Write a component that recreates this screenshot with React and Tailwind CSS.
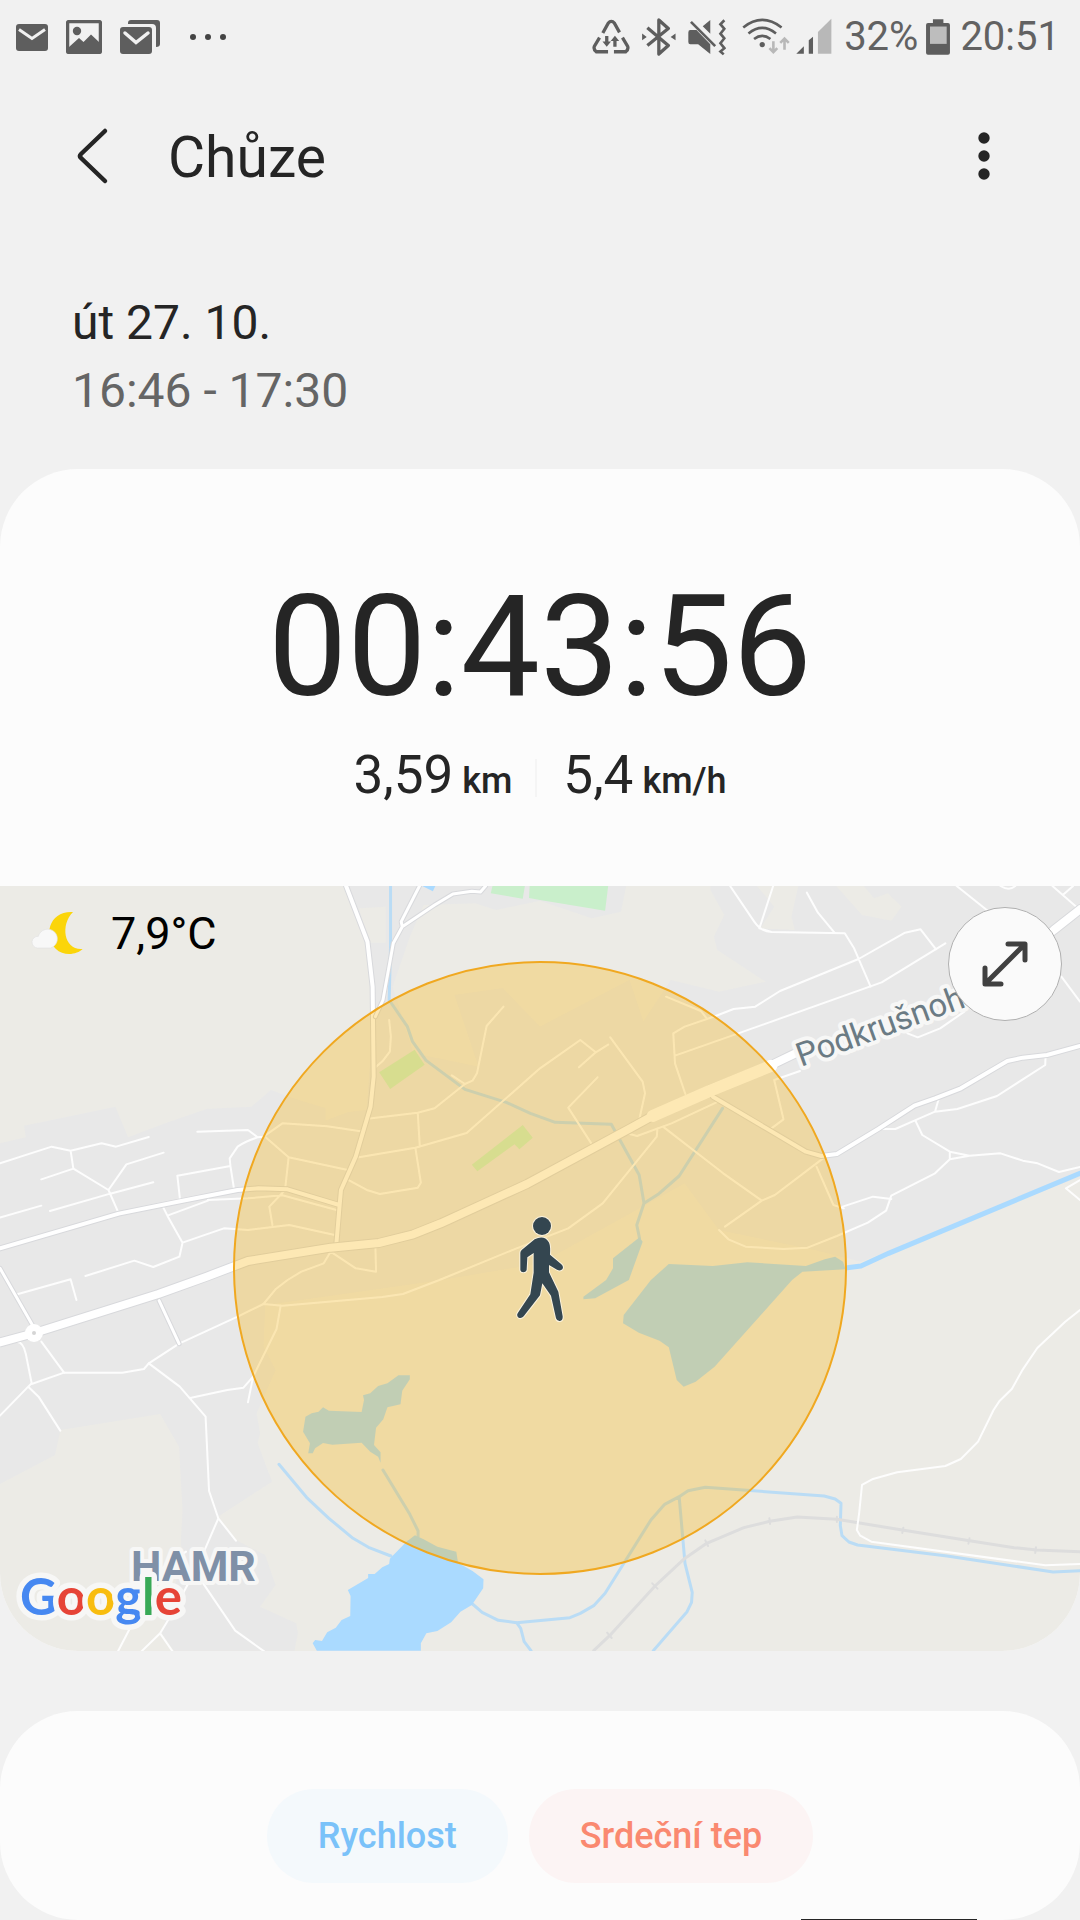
import React from "react";

const dark = "#5e5e5e";
const pale = "#b8b8b8";

function StatusBar() {
  return (
    <div className="flex h-[74px] items-center justify-between pl-4 pr-5 text-[40px] leading-none text-[#626262]">
      <div className="flex items-center gap-[18px]">
        <svg className="h-[34px] w-8" viewBox="0 0 32 34" aria-label="E-mail">
          <rect y="4" width="32" height="27" rx="3" fill={dark} />
          <path d="M3 9.500L16 18.500 29 9.500" fill="none" stroke="#f1f1f1" strokeWidth="3" />
        </svg>
        <svg className="h-[34px] w-9" viewBox="0 0 36 34" aria-label="Obrázek">
          <rect x="1.500" y="1.500" width="33" height="31" rx="2" fill="none" stroke={dark} strokeWidth="3.500" />
          <circle cx="11" cy="11" r="4.200" fill={dark} />
          <path d="M3 27L13 18 17.500 22 25 14.500 33 22V32H3z" fill={dark} />
        </svg>
        <svg className="h-[34px] w-10" viewBox="0 0 40 34" aria-label="E-maily">
          <path d="M8 3Q8 0 11 0H37Q40 0 40 3V24Q40 27 36 27V8Q36 4 32 4H8z" fill={dark} />
          <rect y="7" width="32" height="27" rx="3" fill={dark} />
          <path d="M5 13L16 22.500 28 13" fill="none" stroke="#f1f1f1" strokeWidth="3.500" strokeLinecap="round" />
        </svg>
        <svg className="ml-3 h-[34px] w-9" viewBox="0 0 36 34" aria-label="Další oznámení">
          <g fill="#444"><circle cx="3" cy="17" r="3" /><circle cx="18" cy="17" r="3" /><circle cx="33" cy="17" r="3" /></g>
        </svg>
      </div>
      <div className="flex items-center">
        <svg className="h-[38px] w-[38px]" viewBox="90 50 114 116" aria-label="Úspora dat">
          <g fill="none" stroke={dark} strokeWidth="10">
            <path d="M122 96L139 65Q143 60 148 60Q153 60 157 65L173 94" />
            <path d="M112 110L96 137Q93 146 102 153H138" />
            <path d="M182 110L198 137Q201 146 192 153H156" />
          </g>
          <path d="M129 105h10v17h8l-13 16-13-16h8zM154 138h10v-18h8l-13-16-13 16h8z" fill={dark} />
        </svg>
        <svg className="ml-[11px] h-[38px] w-[35px]" viewBox="236 50 104 116" aria-label="Bluetooth">
          <path d="M254 80L318 134 289 160V56L318 82 254 134" fill="none" stroke={dark} strokeWidth="10" strokeLinejoin="round" />
          <path d="M238 97v21l14-10zM340 97v21l-15-10z" fill={dark} />
        </svg>
        <svg className="ml-3 h-[38px] w-[38px]" viewBox="378 50 114 116" aria-label="Vibrace">
          <path d="M384 87H403L445 130V160L408 130H384Q378 130 378 123V94Q378 87 384 87zM422 75L445 56V98z" fill={dark} />
          <path d="M386 62L460 136" stroke={dark} strokeWidth="8" />
          <path d="M488 57L476 69 488 83 476 98 488 112 476 127 488 142 476 152 486 161" fill="none" stroke={dark} strokeWidth="8" />
        </svg>
        <svg className="ml-4 h-[38px] w-12" viewBox="540 50 145 116" aria-label="Wi-Fi">
          <g fill="none" stroke={dark} strokeWidth="8">
            <path d="M543 79Q601 33 660 79" /><path d="M559 97Q601 63 643 97" /><path d="M576 114Q601 95 626 114" />
          </g>
          <circle cx="601" cy="131" r="8" fill={dark} />
          <path d="M635 121V152M623 142L635 154 647 142M669 147V114M656 126L669 113 682 126" fill="none" stroke={pale} strokeWidth="8" />
        </svg>
        <svg className="ml-[6px] h-[38px] w-9" viewBox="703 50 108 116" aria-label="Signál">
          <path d="M703 159L726 136V159zM741 118L754 107V159H741z" fill={dark} />
          <path d="M769 93L810 52V159H769z" fill={pale} />
        </svg>
        <span className="ml-3">32%</span>
        <svg className="ml-2 h-[38px] w-6" viewBox="1103 50 73 116" aria-label="Baterie">
          <path d="M1124 54H1156V65H1170Q1176 65 1176 71V156Q1176 162 1170 162H1109Q1103 162 1103 156V71Q1103 65 1109 65H1124z" fill={dark} />
          <path d="M1115 76H1166V129H1115z" fill="#bdbdbd" />
        </svg>
        <span className="ml-[10px]">20:51</span>
      </div>
    </div>
  );
}

function Line({ d, w = 2, c = "#fdfdfd" }) {
  return <path d={d} fill="none" stroke={c} strokeWidth={w} strokeLinejoin="round" strokeLinecap="round" vectorEffect="non-scaling-stroke" />;
}

function Road({ d, w }) {
  return (
    <>
      <Line d={d} w={w + 2} c="#d8d9dc" />
      <Line d={d} w={w} c="#ffffff" />
    </>
  );
}

const stream = "#badcf5";

function RouteMap() {
  return (
    <svg className="block h-full w-full" viewBox="0 886 1080 765" preserveAspectRatio="xMidYMid slice" role="img" aria-label="Mapa trasy">
      <rect y="886" width="1080" height="765" fill="#ecebe6" />
      <g transform="translate(0 880) scale(.34439 .33333)">
        <path fill="#e8e8e8" d="M0 790L75 772 70 737 335 680 372 772 480 730 600 687 730 680 787 630 850 655 945 685 945 722 1010 697 1065 690 1085 400 1070 190 1040 85 1005 18H1818L1803 95 1718 115 1568 62 1440 90 1380 70 1230 75 1190 170 1140 320 1200 520 1390 560 1320 345 1460 325 1568 440 1828 300 1868 425 1948 300 2088 335 2223 305 2083 210 2073 170 2103 105 2063 30V18H3136V890L2500 1145 2368 1110 2088 1050 1988 910 1568 1150 1280 1200 770 1275 765 1400 800 1470 745 1600 755 1660 748 1690 790 1805 633 1910 685 1980 770 2025 800 2115 755 2180 860 2230 865 2260 855 2312H505L470 2260 530 2030 525 1990 530 1890 520 1700 465 1602 175 1650 160 1725 0 1812z" />
        <path fill="#ecebe6" d="M1042 85L1120 80V188H1072zM2198 18L2248 80 2208 145 2308 150 2298 110 2318 18zM2428 18L2503 105 2588 122 2618 80 2578 40 2538 55 2508 18z" />
        <path fill="#c9efcb" d="M1430 18H1524L1518 56 1425 40zM1538 18H1766L1757 92 1568 60 1536 54zM1101 577L1204 509 1233 554 1133 627zM1370 854L1518 735 1547 773 1508 808 1494 793 1386 874z" />
        <path fill="#aadaff" d="M1226 18H1264L1257 34z" />

        <g>
          <Line c={stream} w={3} d="M1134 18V200L1130 360 1183 440 1198 485 1237 541 1350 628 1470 667 1540 700 1612 727 1775 733 1856 885 1870 970 1849 1035 1857 1075M1870 970L1911 943 1972 888 2098 685" />
          <Line c="#aadaff" w={5} d="M2460 1163L2500 1158 2580 1120 3136 880" />
          <Line c={stream} w={3} d="M810 1753L890 1852 955 1915 1025 1975 1070 2002 1135 2028M1112 1770L1190 1903 1214 1953V1970M1372 2172L1400 2197 1447 2221 1500 2228 1655 2213 1685 2200 1724 2177 1757 2140 1890 1920 1930 1873 1972 1850 1998 1832 2048 1822 2393 1848 2425 1857 2442 1870 2440 1937 2445 1967 2465 1986 2490 1995 2750 2028 3058 2076 3136 2072M1500 2228L1512 2245 1522 2285 1542 2312M1972 1850L1989 2050 2010 2137 2008 2167 1995 2195 1897 2312" />
          <path fill="#aadaff" d="M1857 1072L1866 1085 1826 1200 1728 1255 1694 1258V1250L1760 1200 1780 1165V1135zM1942 1152L1890 1200 1811 1305 1809 1330 1855 1358 1915 1382 1942 1402 1965 1500 1985 1520 2020 1505 2075 1460 2300 1200 2330 1175 2455 1168 2448 1145 2425 1130 2395 1138 2340 1158 2170 1147 2070 1158zM880 1655L887 1610 905 1600 925 1595 938 1582 955 1592 1050 1596 1057 1560 1054 1546 1075 1540 1098 1518 1125 1510 1157 1486H1190V1498L1168 1532 1163 1573 1125 1582 1113 1618 1092 1643 1086 1695 1105 1717V1748L1098 1730 1075 1715 1050 1688 965 1694 938 1689 915 1705 908 1720H895L900 1690z" />
          <path fill="#aadaff" d="M1180 1985L1205 1966 1230 1978 1270 2000 1325 2015 1330 2048 1372 2073 1404 2098 1403 2125 1370 2175 1337 2195 1310 2227 1270 2253 1238 2260 1222 2290V2312H920L908 2290 915 2280 935 2283 950 2257 975 2243 992 2220 1017 2208 1018 2148 1010 2130 1069 2094V2082H1088L1110 2062 1130 2052 1132 2036z" />
        </g>

        <Line w={3} c="#dddddd" d="M1724 2312L1770 2267 1902 2118 1985 2038 2052 1990 2160 1943 2235 1924 2315 1911 2430 1918 2620 1950 2820 1983 2945 2003 3010 2010 3136 2015" />
        <Line w={2} c="#dddddd" d="M1763 2258L1776 2274M1894 2110L1909 2126M2048 1981L2056 1998M2234 1915L2236 1932M2430 1910V1926M2623 1943L2620 1959M2815 1975L2812 1991M3008 2002L3006 2019" />

        <Line d="M0 850L150 800 205 812 295 790 337 800 432 771M205 812L213 866 120 898M213 866L315 930 367 853 475 818M145 993L320 941 445 907M315 930L345 1001M0 1013L120 977M573 755L720 750 748 772 765 770 820 730 950 739 1047 754M748 772Q710 785 690 800L667 835 669 858 515 887 523 962M669 858L680 930M773 773L838 832 828 927M838 832L1010 870M604 950V962L486 1007M604 960L720 955 820 946 985 992M473 980L486 1007 530 1088 521 1130 445 1161 390 1142 248 1188M530 1088L650 1045 720 1050 840 1035 972 1065M828 930L782 980 791 1035" />
        <Line d="M1130 420L1135 470 1132 515 1112 542 1087 565M1462 380L1413 438 1385 580 1372 602 1350 612 1262 685 1213 698 1067 716M1312 586L1350 612M1213 698L1219 800M1033 833L1206 803 1355 759 1568 565 1685 480 1730 517 1766 494M1730 517L1681 562M1206 803L1222 908 1213 923 1103 942 1065 930 1003 895" />
        <Line d="M1772 472L1866 605 1873 640 1856 720M1735 592L1650 683 1721 797M1934 350L2035 393 2052 415M2245 18L2205 145 2240 156 2453 160 2480 205 2528 320M2343 38L2375 98 2423 158M2120 18L2190 125Q2210 155 2240 156M2745 190L2560 307 2150 458 1960 527M2718 208L2673 148 2628 158 2493 237 2265 333 2193 380 2130 387 2078 408 1988 440 1955 460 1960 550 1990 642M2778 18L2868 92M3056 18L3136 90M3086 45L3116 18M2905 18Q2930 34 2948 18M2800 395L2730 445 2665 472 2635 460M3082 290L3136 365M2323 573L2248 600 2275 718 2240 745" />
        <Line d="M2551 747H2600L2655 722 2715 695 2780 687 2895 648 3035 555 3036 530M2727 652L2715 695M2658 722L2678 765 2758 815 2815 827 2905 820 2970 842 3013 850 3075 876 3136 861M2758 815V838L2715 880 2588 947 2573 992 2520 1028 2430 1068 2345 1103 2275 1107 2165 1100 2115 1078 2088 1050M2758 838L2815 827M2447 980L2535 950 2588 957M2390 835L2250 945 2212 962 2105 1040M2212 962L2100 880 1925 740M2371 860L2420 975 2450 985M1820 760L1850 768 1950 730 2085 665M1909 745L1907 770 1750 970 1650 1045 1500 1105 1276 1200 1170 1242 1110 1251 820 1277 765 1272 690 1310 520 1391 432 1450 418 1467 355 1478H186L92 1512M3136 900L3095 925 3136 960" />
        <Line d="M960 1115L940 1150 875 1175 835 1200 800 1228 765 1272M960 1115L1033 1165 1092 1175 1090 1100M815 1277L803 1347 735 1490 707 1523 660 1530 552 1554M735 1490L720 1567M432 1450L522 1520 597 1610 607 1833 634 1915 590 2020 560 2085 500 2200 465 2260 410 2315M634 1915L685 1982M465 2260L505 2320M580 2095L683 2252 768 2315M342 2315L385 2230 450 2080 540 2015M120 1385L186 1478M50 1385Q68 1387 75 1422L92 1510 82 1520 0 1607M82 1520L112 1550 175 1652M45 1244L205 1198 222 1260M462 1262L520 1391" />
        <Line d="M3136 1290L3093 1325 3012 1404 2970 1468 2938 1527 2903 1562 2885 1590 2840 1685 2790 1737 2745 1758 2605 1777 2535 1797 2503 1815 2495 1897 2488 1950 2498 1967 2530 1985 3035 2056 3136 2052" />
        <Road w={3} d="M0 1165L97 1340M462 1262L520 1391" />
        <Road w={4} d="M0 1105L345 1001 523 964 690 930 750 925 835 928 985 975M1005 18L1067 185 1082 320 1085 590 1076 680 1033 830 990 930 985 990 976 1100" />
        <Road w={3} d="M1218 18L1165 125 1168 140 1142 190 1112 360 1090 410M1168 140L1262 75 1315 42 1370 34 1395 36 1410 18" />
        <Road w={4} d="M2070 650L2340 815 2385 828 2430 822 2550 747 2655 677 2715 655 2790 625 2925 543 2970 533 3040 525 3136 498" />
        <Road w={8} d="M0 1387L100 1359 460 1242 600 1190 720 1143 960 1103 1100 1089 1200 1063 1280 1030 1530 912 1830 745 1900 705 2060 630 2230 560 2310 520" />
        <Line w={12} c="#ffffff" d="M1895 708L2060 633 2240 557" />
        <Road w={8} d="M2980 220L3060 150 3136 88" />
      </g>
      <circle cx="34" cy="1333" r="9" fill="#fff" />
      <circle cx="34" cy="1333" r="2" fill="#d5d5d5" />
      <circle cx="540" cy="1268" r="306" fill="rgba(250,179,5,.3)" stroke="#f0a820" strokeWidth="2" />
      <g fontFamily="Roboto, sans-serif" stroke="#f7f7f6" strokeLinejoin="round" paintOrder="stroke">
        <text x="801" y="1067" transform="rotate(-20 801 1067)" fontSize="33" fill="#6b7b84" strokeWidth="8">Podkrušnohorská</text>
        <text x="131" y="1581" fontSize="43" fontWeight="700" fill="#7f90a7" strokeWidth="8">HAMR</text>
        <text x="20" y="1615" fontFamily="Lato, sans-serif" fontSize="51" fontWeight="700" strokeWidth="11">
          <tspan fill="#4688f1">G</tspan><tspan fill="#e64437">o</tspan><tspan fill="#f8bd10">o</tspan><tspan fill="#4688f1">g</tspan><tspan fill="#38a956">l</tspan><tspan fill="#e64437">e</tspan>
        </text>
      </g>
      <g transform="translate(340 1180) scale(.33333)" strokeLinecap="round" strokeLinejoin="round">
        {["#fbf3df", "#344650"].map((c, i) => (
          <g key={c} stroke={c} fill={c} strokeWidth={i ? 0 : 6}>
            <circle cx="606" cy="138" r="27" />
            <path d="M584 178Q612 164 626 186Q632 196 630 224L664 253Q672 260 667 268Q661 274 651 269L627 255V277L655 335 668 409Q669 421 660 423Q651 424 648 415L633 347 607 310 600 346 551 409Q544 417 536 413Q528 407 534 398L571 343 581 278V219L562 232 560 269Q558 277 550 277Q542 277 541 269V219Q541 214 545 210z" />
          </g>
        ))}
      </g>
    </svg>
  );
}

function Metric({ value, unit }) {
  return (
    <p className="flex items-baseline gap-[9px]">
      <span className="text-[53px] leading-[64px]">{value}</span>
      <span className="text-[36px] font-medium leading-[64px]">{unit}</span>
    </p>
  );
}

export default function App() {
  return (
    <main className="min-h-screen w-full overflow-hidden bg-[#f1f1f1] font-['Roboto',sans-serif] text-[#252525]">
      <StatusBar />
      <header className="flex h-[164px] items-center pl-[72px] pr-[76px]">
        <button type="button" aria-label="Zpět" className="h-[60px] w-10">
          <svg className="h-[60px] w-10" viewBox="0 0 40 60" fill="none" stroke="#252525" strokeWidth="4.500" strokeLinecap="round" strokeLinejoin="round">
            <path d="M33 5L9 28Q7 30 9 32L33 55" />
          </svg>
        </button>
        <h1 className="ml-14 pt-[3px] text-[57px] leading-[66px]">Chůze</h1>
        <button type="button" aria-label="Další možnosti" className="ml-auto h-[60px] w-10">
          <svg className="h-[60px] w-10" viewBox="0 0 40 60" fill="#252525">
            <circle cx="20" cy="12" r="5.700" /><circle cx="20" cy="30" r="5.700" /><circle cx="20" cy="48" r="5.700" />
          </svg>
        </button>
      </header>
      <section className="px-[72px] pb-11 pt-[51px] text-[48px] leading-[68px]">
        <p>út 27. 10.</p>
        <p className="text-[#656565]">16:46 - 17:30</p>
      </section>

      <section className="overflow-hidden rounded-[78px] bg-[#fcfcfc]">
        <div className="flex flex-col items-center pb-[73px] pt-24">
          <p className="text-[141px] leading-[164px]">00:43:56</p>
          <div className="mt-[14px] flex items-center pb-[6px]">
            <Metric value="3,59" unit="km" />
            <span className="ml-[23px] mr-[26px] h-[38px] w-[2px] bg-[#f5f5f5]" />
            <Metric value="5,4" unit="km/h" />
          </div>
        </div>
        <div className="relative -mt-[6px] h-[765px]">
          <RouteMap />
          <div className="absolute left-[31px] top-[21px] flex items-center gap-7 text-[45px] leading-[54px] text-black">
            <svg className="h-12 w-[52px]" viewBox="96 42 156 144" aria-label="Oblačná noc">
              <path d="M222 48C150 44 132 120 170 158C194 182 234 176 251 159C196 164 182 88 222 48z" fill="#fbd50a" />
              <path d="M115 156A17 17 0 0 1 118 121A29 29 0 1 1 155 156z" fill="#f8f8f8" stroke="#e3e3e3" strokeWidth="2" />
            </svg>
            <span>7,9°C</span>
          </div>
          <button type="button" aria-label="Zvětšit mapu" className="absolute right-[18px] top-[21px] flex h-[114px] w-[114px] items-center justify-center rounded-full border border-[#b0b0b0] bg-[#fafafa]">
            <svg className="h-12 w-12" viewBox="0 0 48 48" fill="none" stroke="#404040" strokeWidth="5" strokeLinecap="round" strokeLinejoin="round">
              <path d="M5 43L43 5M27 4H44V20M4 28V44H20" />
            </svg>
          </button>
        </div>
      </section>

      <section className="mt-[60px] flex h-[209px] items-start justify-center gap-[21px] overflow-hidden rounded-[78px] bg-[#fcfcfc] pt-[78px] text-[36px] font-medium">
        <button type="button" className="h-[94px] rounded-full bg-[#f4f9fc] px-[51px] text-[#7ac2f9]">Rychlost</button>
        <button type="button" className="h-[94px] rounded-full bg-[#fcf4f4] px-[51px] text-[#fa8970]">Srdeční tep</button>
      </section>
      <div className="fixed bottom-0 right-[103px] h-px w-[176px] bg-[#252525]" />
    </main>
  );
}
